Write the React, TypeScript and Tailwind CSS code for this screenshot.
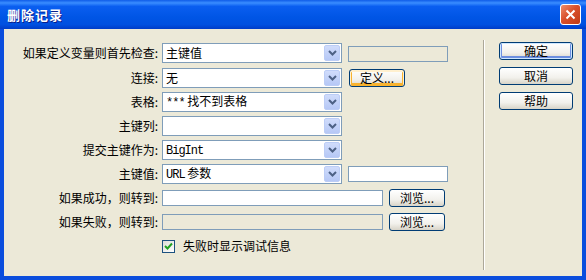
import React from "react";

const cjk = "font-[family-name:'Noto_Sans_CJK_SC','Noto_Sans',sans-serif]";
const mono = "font-[family-name:'Liberation_Mono','Noto_Sans_CJK_SC',monospace] tracking-[-1px]";

function Arrow() {
  return (
    <div className="mr-px flex h-[16px] w-[16px] items-center justify-center rounded-[2px] border border-[#BCCDF6] bg-[linear-gradient(to_bottom,#D0DCFB,#B6C8F6)]">
      <svg width="9" height="6" viewBox="0 0 9 6">
        <path d="M1 1 L4.5 4.5 L8 1" fill="none" stroke="#4D6185" strokeWidth="2" />
      </svg>
    </div>
  );
}

function Select({ children }: { children?: React.ReactNode }) {
  return (
    <div className="flex h-[20px] w-[180px] items-center border border-[#7F9DB9] bg-white">
      <div className="flex-1 pl-[3px] text-[12px] leading-none">{children}</div>
      <Arrow />
    </div>
  );
}

function Input({ w, disabled }: { w: string; disabled?: boolean }) {
  return (
    <div
      className={`h-[16px] border border-[#7F9DB9] ${w} ${disabled ? "bg-[#ECE9D8]" : "bg-white"}`}
    />
  );
}

function Button({ label, kind, w }: { label: string; kind?: "default" | "hot"; w: string }) {
  const ring =
    kind === "default"
      ? "shadow-[inset_0_0_0_1px_#CEE7FF,inset_0_-1px_0_2px_#6D8FE0]"
      : kind === "hot"
      ? "shadow-[inset_0_1px_0_1px_#FFF0CF,inset_0_-1px_0_2px_#F8B330]"
      : "";
  return (
    <div
      className={`flex h-[18px] ${w} items-center justify-center rounded-[3px] border border-[#003C74] bg-[linear-gradient(to_bottom,#FFFFFF,#F2F1EC_60%,#D8D4C8)] text-[12px] leading-none text-black ${ring}`}
    >
      {label}
    </div>
  );
}

function Row({ label, h, children }: { label?: string; h: string; children?: React.ReactNode }) {
  return (
    <div className={`flex items-center ${h}`}>
      <div className="w-[154px] text-right text-[12px] leading-none">{label}</div>
      <div className="ml-[4px] flex items-center">{children}</div>
    </div>
  );
}

export default function App() {
  return (
    <div className={`flex h-[280px] w-[586px] flex-col bg-[#0A4DDD] text-black ${cjk}`}>
      {/* Title bar */}
      <div className="flex h-[29px] items-center justify-between bg-[linear-gradient(to_bottom,#0F5CE8_0%,#3A8DFF_10%,#0A5EF0_22%,#0055E5_60%,#0050E0_85%,#003CC8_100%)] pl-[7px] pr-[5px]">
        <span className="text-[13px] font-bold tracking-[1px] text-white [text-shadow:1px_1px_0_#0A1E8A]">
          删除记录
        </span>
        <div className="flex h-[21px] w-[21px] items-center justify-center rounded-[3px] border border-white bg-[linear-gradient(135deg,#EE8E6C,#D9502C_45%,#C13A14)]">
          <svg width="11" height="11" viewBox="0 0 11 11">
            <path d="M1.5 1.5 L9.5 9.5 M9.5 1.5 L1.5 9.5" stroke="#fff" strokeWidth="2" />
          </svg>
        </div>
      </div>

      {/* Client area */}
      <div className="mx-[4px] mb-[4px] flex flex-1 bg-[#ECE9D8]">
        <div className="w-[479px] pt-[11px]">
          <Row label="如果定义变量则首先检查:" h="h-[25px]">
            <Select>主键值</Select>
            <div className="ml-[6px] mt-[3px]">
              <Input w="w-[100px]" disabled />
            </div>
          </Row>
          <Row label="连接:" h="h-[25px]">
            <Select>无</Select>
            <div className="ml-[7px]">
              <Button label="定义..." kind="hot" w="w-[56px]" />
            </div>
          </Row>
          <Row label="表格:" h="h-[24px]">
            <Select>
              <span className={mono}>***</span> 找不到表格
            </Select>
          </Row>
          <Row label="主键列:" h="h-[24px]">
            <Select />
          </Row>
          <Row label="提交主键作为:" h="h-[24px]">
            <Select>
              <span className={mono}>BigInt</span>
            </Select>
          </Row>
          <Row label="主键值:" h="h-[24px]">
            <Select>
              <span className={mono}>URL</span> 参数
            </Select>
            <div className="ml-[6px]">
              <Input w="w-[100px]" />
            </div>
          </Row>
          <Row label="如果成功，则转到:" h="h-[24px]">
            <Input w="w-[221px]" />
            <div className="ml-[6px]">
              <Button label="浏览..." w="w-[56px]" />
            </div>
          </Row>
          <Row label="如果失败，则转到:" h="h-[24px]">
            <Input w="w-[221px]" disabled />
            <div className="ml-[6px]">
              <Button label="浏览..." w="w-[56px]" />
            </div>
          </Row>
          <Row h="h-[24px]">
            <div className="flex h-[13px] w-[13px] items-center justify-center border border-[#1C5180] bg-[linear-gradient(135deg,#DCDCD7,#FFFFFF)]">
              <svg width="9" height="9" viewBox="0 0 9 9">
                <path d="M1 4 L3.5 6.5 L8 1.5" fill="none" stroke="#21A121" strokeWidth="2" />
              </svg>
            </div>
            <span className="ml-[8px] text-[12px] leading-none">失败时显示调试信息</span>
          </Row>
        </div>

        {/* Separator */}
        <div className="mb-[6px] mt-[11px] flex">
          <div className="w-px bg-[#ACA899]" />
          <div className="w-px bg-white" />
        </div>

        {/* Buttons */}
        <div className="ml-[14px] flex flex-col gap-[7px] pt-[13px]">
          <Button label="确定" kind="default" w="w-[74px]" />
          <Button label="取消" w="w-[74px]" />
          <Button label="帮助" w="w-[74px]" />
        </div>
      </div>
    </div>
  );
}
